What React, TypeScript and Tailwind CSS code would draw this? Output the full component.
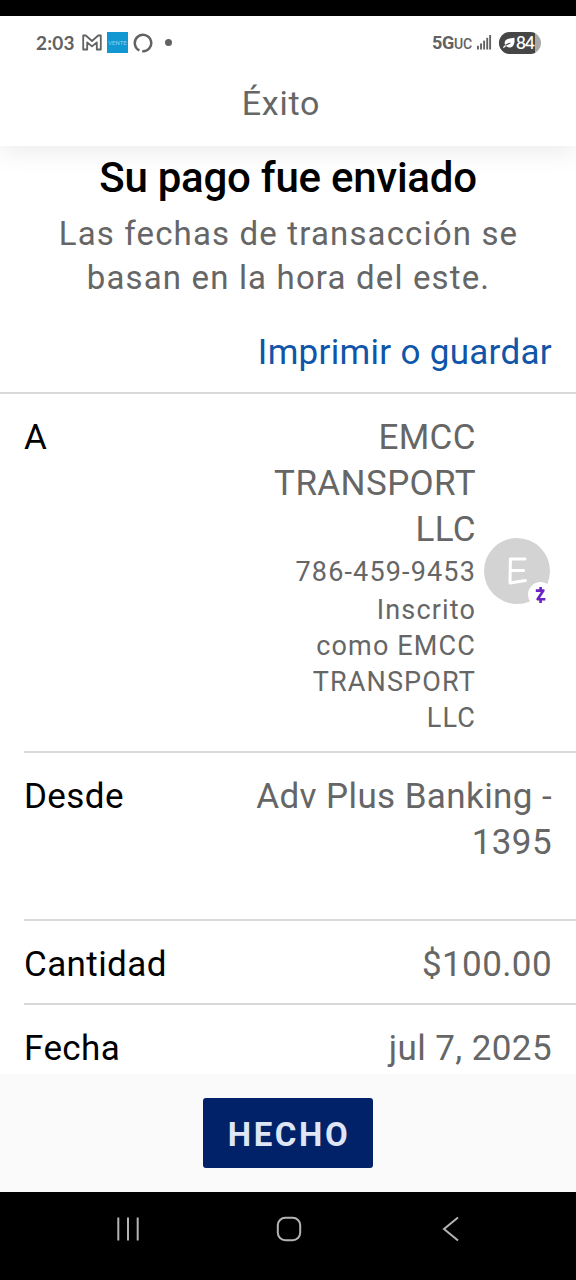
import type { ReactNode } from 'react'

interface RowProps {
  label: string
  className: string
  children: ReactNode
}

function StatusBar() {
  return (
    <div className="flex h-[53px] items-center justify-between pl-[36px] pr-[35px] text-[#626262]">
      <div className="flex items-center">
        <span className="w-[46px] font-['Lato'] text-[19px] font-bold leading-none tracking-[0.2px]">2:03</span>
        <svg width="20" height="17" viewBox="0 0 20 17" fill="none" stroke="currentColor" strokeWidth="1.8" strokeLinejoin="round">
          <path d="M1.2 15.5V1.5h2.6L10 7l6.2-5.5h2.6v14h-4V8.4L10 12.4 5.2 8.4v7.1z" />
        </svg>
        <span className="ml-[5px] flex h-[21px] w-[21px] items-center justify-center bg-[#1197d1] text-[6px] leading-none text-[#8fd0ee]">
          VENTE
        </span>
        <svg className="ml-[5px]" width="20" height="20" viewBox="0 0 20 20" fill="none" stroke="currentColor" strokeWidth="2.5">
          <path d="M9.2 18.2A8.2 8.2 0 1 0 6.4 17.4" />
        </svg>
        <span className="ml-[12px] h-[7px] w-[7px] rounded-full bg-[#626262]" />
      </div>

      <div className="flex items-center">
        <span className="text-[18px] font-bold leading-none tracking-[-0.2px]">
          5G<span className="text-[14px] font-medium">UC</span>
        </span>
        <svg className="ml-[5px]" width="15" height="17" viewBox="0 0 16 17" fill="currentColor">
          <rect x="0" y="12" width="2" height="4" />
          <rect x="3.3" y="9.5" width="2" height="6.5" />
          <rect x="6.6" y="6.5" width="2" height="9.5" />
          <rect x="9.9" y="3.5" width="2" height="12.5" />
          <rect x="13" y="0.5" width="2" height="15.5" />
        </svg>
        <div className="ml-[7px] flex h-[22px] w-[42px] items-center overflow-hidden rounded-full bg-[#a9a9a9]">
          <div className="flex h-full w-[36px] items-center bg-[#464646] pl-[4px] text-white">
            <svg className="mr-[1px] shrink-0" width="12" height="12" viewBox="0 0 12 12" fill="none">
              <path d="M2.4 3.6C4.6.8 8 1.8 11.4.8 12 5 11.2 9.6 7.6 10.4 4.8 10.8 3.4 9.4 2.2 8.2 1.4 6.8 1.4 5 2.4 3.6z" fill="currentColor" />
              <path d="M.4 10.8C2 8 4.2 7 7.4 6" stroke="#464646" strokeWidth="1.2" />
              <path d="M.4 10.6L2.6 8.6" stroke="currentColor" strokeWidth="1.4" />
            </svg>
            <span className="font-['Lato'] text-[17px] font-semibold leading-none tracking-[-0.8px]">84</span>
          </div>
        </div>
      </div>
    </div>
  )
}

function Avatar() {
  return (
    <div className="relative h-[66px] w-[66px] rounded-full bg-[#d3d3d3]">
      <svg className="absolute left-[23px] top-[18px]" width="22" height="30" viewBox="0 0 22 30" fill="none" stroke="#fff" strokeWidth="3" strokeLinecap="round" strokeLinejoin="round">
        <path d="M18 3H3.4L3 27 18.4 24.4M3.4 14.6H16.6" />
      </svg>
      <div className="absolute left-[44px] top-[44px] flex h-[25px] w-[25px] items-center justify-center rounded-full bg-white">
        <svg width="11" height="18" viewBox="0 0 11 18" fill="none" stroke="#6b22c4" strokeWidth="2.6" strokeLinejoin="round">
          <path d="M.8 4.6H8.4L2.6 13.2H10.4M5.6 1V4.6M5.6 13.2V17" />
        </svg>
      </div>
    </div>
  )
}

function Row({ label, className, children }: RowProps) {
  return (
    <div className={`ml-6 flex shrink-0 justify-between pt-[21px] ${className}`}>
      <span className="text-black">{label}</span>
      {children}
    </div>
  )
}

function NavBar() {
  return (
    <div className="flex h-[88px] items-start bg-black pl-[116px] pt-[24px] text-[#b4b4b4]">
      <svg width="24" height="26" viewBox="0 0 24 26" fill="none" stroke="currentColor" strokeWidth="2">
        <path d="M2.3 1.5v23M12 1.5v23M21.7 1.5v23" />
      </svg>
      <svg className="ml-[136px]" width="26" height="26" viewBox="0 0 26 26" fill="none" stroke="currentColor" strokeWidth="2">
        <rect x="1.8" y="1.8" width="22.4" height="22.4" rx="7.5" />
      </svg>
      <svg className="ml-[140px]" width="18" height="26" viewBox="0 0 18 26" fill="none" stroke="currentColor" strokeWidth="2">
        <path d="M16 1.5L2 13l14 11.5" />
      </svg>
    </div>
  )
}

export default function App() {
  return (
    <div className="flex h-[1280px] w-[576px] flex-col overflow-hidden bg-white font-['Roboto',sans-serif]">
      <div className="h-[16px] bg-black" />

      <header className="relative h-[130px] bg-white shadow-[0_6px_24px_rgba(0,0,0,0.08)]">
        <StatusBar />
        <h1 className="mt-[11px] pr-[14px] text-center text-[34px] leading-[46px] tracking-[0.8px] text-[#666]">Éxito</h1>
      </header>

      <main className="flex h-[928px] flex-col overflow-hidden text-[35px] leading-[46px] tracking-[0.4px] text-[#666]">
        <h2 className="relative mt-[5px] shrink-0 text-center text-[42px] font-medium leading-[54px] tracking-[-0.25px] text-black">
          Su pago fue enviado
        </h2>
        <p className="mt-[7px] shrink-0 pl-[1px] text-center text-[33px] leading-[44px] tracking-[1.15px]">
          Las fechas de transacción se
          <br />
          basan en la hora del este.
        </p>
        <div className="mt-[29px] flex h-[65px] shrink-0 justify-end border-b-2 border-[#d9d9d9] pr-[24px] pt-[1px] text-[#0f55a8]">
          <a className="tracking-[0.3px]">Imprimir o guardar</a>
        </div>

        <Row label="A" className="h-[359px] border-b-2 border-[#d9d9d9] pr-[26px]">
          <div className="flex">
            <div className="w-[210px] text-right">
              <p>EMCC TRANSPORT LLC</p>
              <div className="mt-[1px] text-[27px] leading-[36px] tracking-[1.15px]">
                <p>786-459-9453</p>
                <p className="mt-[2px]">
                  Inscrito
                  <br />
                  como EMCC TRANSPORT LLC
                </p>
              </div>
            </div>
            <div className="ml-[8px] mt-[123px]">
              <Avatar />
            </div>
          </div>
        </Row>
        <Row label="Desde" className="h-[168px] border-b-2 border-[#d9d9d9] pr-[24px]">
          <span className="w-[310px] text-right">Adv Plus Banking - 1395</span>
        </Row>
        <Row label="Cantidad" className="h-[84px] border-b-2 border-[#d9d9d9] pr-[24px]">
          <span>$100.00</span>
        </Row>
        <Row label="Fecha" className="pr-[24px]">
          <span>jul 7, 2025</span>
        </Row>
      </main>

      <footer className="flex h-[118px] bg-[#fafafa] pl-[203px] pt-[24px]">
        <button className="h-[70px] w-[170px] rounded-[3px] bg-[#012169] pl-[2px] pt-[3px] text-[33px] font-bold tracking-[2.6px] text-[#dfe5f5]">
          HECHO
        </button>
      </footer>

      <NavBar />
    </div>
  )
}
